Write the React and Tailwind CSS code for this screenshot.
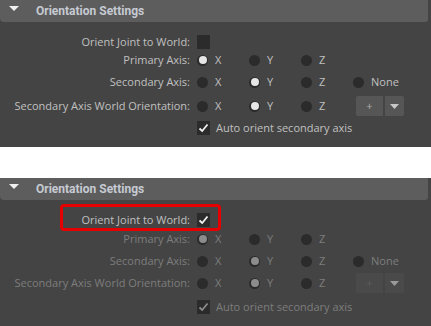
import React from "react";

const F = { fontFamily: '"Open Sans", "Noto Sans", sans-serif' };
const H = { fontFamily: 'Roboto, "Open Sans", sans-serif' };

function Radio({ on, dis }) {
  return (
    <span className="w-[11px] h-[11px] rounded-full bg-[#2b2b2b] flex items-center justify-center shrink-0">
      {on ? (
        <span className={"w-[8px] h-[8px] rounded-full " + (dis ? "bg-[#8c8c8c]" : "bg-[#e6e6e6]")} />
      ) : null}
    </span>
  );
}

function Opt({ label, on, dis, w = "w-[52px]" }) {
  return (
    <div className={"flex items-center " + w}>
      <Radio on={on} dis={dis} />
      <span className={"ml-[7px] " + (dis ? "text-[#7d7d7d]" : "text-[#c0c0c0]")}>{label}</span>
    </div>
  );
}

function Check({ on, dis }) {
  return (
    <span className="w-[13px] h-[14px] bg-[#2b2b2b] flex items-center justify-center shrink-0">
      {on ? (
        <svg width="11" height="10" viewBox="0 0 11 10">
          <path d="M1.5 5.5 L4.2 8 L9.5 1.5" fill="none" stroke={dis ? "#8a8a8a" : "#f0f0f0"} strokeWidth="1.8" />
        </svg>
      ) : null}
    </span>
  );
}

function Row({ h, label, bright, dis, children }) {
  return (
    <div className={"flex items-center " + h}>
      <div className={"w-[191px] text-right pr-[1px] " + (bright || !dis ? "text-[#c0c0c0]" : "text-[#7d7d7d]")}>{label}</div>
      <div className="ml-[6px] flex items-center">{children}</div>
    </div>
  );
}

function Panel({ dis, hs, extra, className }) {
  return (
    <div className={"bg-[#444444] relative " + className}>
      <div className="h-[22px] mr-[3px] bg-[#5d5d5d] rounded-bl-[4px] rounded-br-[3px] flex items-center">
        <svg width="10" height="6" viewBox="0 0 10 6" className="ml-[9px] mt-[-5px]">
          <path d="M0 0 L10 0 L5 5 Z" fill="#f0f0f0" />
        </svg>
        <span className="ml-[17px] font-bold text-[#c6cad2] text-[12px]" style={H}>Orientation Settings</span>
      </div>
      <div className="pt-[10px] text-[11px]">
        <Row h={hs[0]} label="Orient Joint to World:" bright dis={dis}>
          <Check on={dis} />
        </Row>
        <Row h={hs[1]} label="Primary Axis:" dis={dis}>
          <Opt label="X" on dis={dis} />
          <Opt label="Y" dis={dis} />
          <Opt label="Z" dis={dis} />
        </Row>
        <Row h={hs[2]} label="Secondary Axis:" dis={dis}>
          <Opt label="X" dis={dis} />
          <Opt label="Y" on dis={dis} />
          <Opt label="Z" dis={dis} />
          <Opt label="None" dis={dis} w="w-[60px]" />
        </Row>
        <Row h={hs[3]} label="Secondary Axis World Orientation:" dis={dis}>
          <Opt label="X" dis={dis} />
          <Opt label="Y" on dis={dis} />
          <Opt label="Z" dis={dis} w="w-[55px]" />
          <div className="flex ml-[0px]">
            <div className={"w-[27px] h-[20px] rounded-l-[2px] flex items-center justify-center text-[11px] " + (dis ? "bg-[#4a4a4a] text-[#5e5e5e]" : "bg-[#565656] text-[#b0b0b0]")}>+</div>
            <div className={"w-[19px] h-[20px] ml-[2px] rounded-r-[2px] flex items-center justify-center " + (dis ? "bg-[#4a4a4a]" : "bg-[#565656]")}>
              <svg width="9" height="5" viewBox="0 0 9 5"><path d="M0 0 L9 0 L4.5 5 Z" fill={dis ? "#9a9a9a" : "#c8c8c8"} /></svg>
            </div>
          </div>
        </Row>
        <Row h={hs[4]} label="" dis={dis}>
          <Check on dis={dis} />
          <span className={"ml-[6px] " + (dis ? "text-[#7d7d7d]" : "text-[#c0c0c0]")}>Auto orient secondary axis</span>
        </Row>
      </div>
      {extra}
    </div>
  );
}

export default function App() {
  return (
    <div className="w-[431px] h-[326px] bg-white flex flex-col overflow-hidden" style={F}>
      <Panel className="h-[147px]" hs={["h-[20px]", "h-[16px]", "h-[28px]", "h-[20px]", "h-[24px]"]} />
      <div className="h-[31px]" />
      <Panel
        dis
        className="flex-1"
        hs={["h-[20px]", "h-[18px]", "h-[26px]", "h-[18px]", "h-[30px]"]}
        extra={<div className="absolute left-[60px] top-[26px] w-[161px] h-[27px] border-[3px] border-[#e60000] rounded-[4px]" />}
      />
    </div>
  );
}
